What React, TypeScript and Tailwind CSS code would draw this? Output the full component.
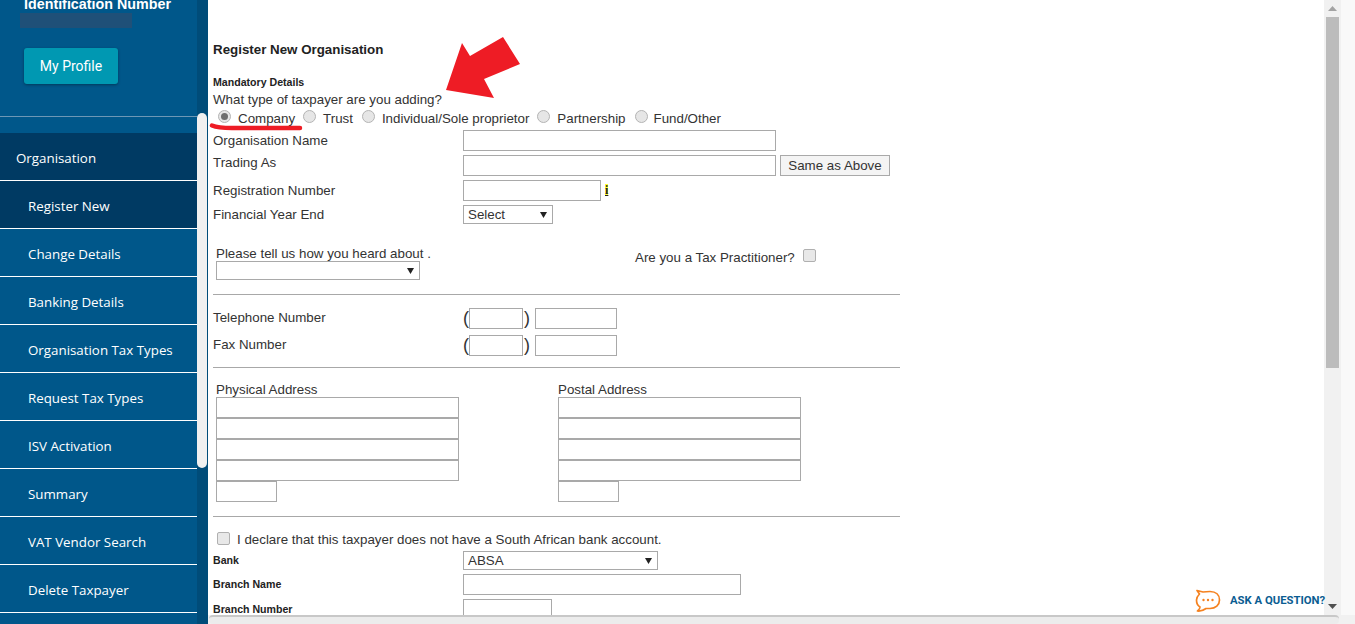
import type { ReactNode } from "react";

const NAV_ITEMS = [
  "Register New",
  "Change Details",
  "Banking Details",
  "Organisation Tax Types",
  "Request Tax Types",
  "ISV Activation",
  "Summary",
  "VAT Vendor Search",
  "Delete Taxpayer",
];

const TAXPAYER_TYPES = [
  { label: "Company", gap: "mr-[8px]", checked: true },
  { label: "Trust", gap: "mr-[9px]" },
  { label: "Individual/Sole proprietor", gap: "mr-[8px]" },
  { label: "Partnership", gap: "mr-[9px]" },
  { label: "Fund/Other", gap: "", tight: true },
];

function Radio({ checked }: { checked?: boolean }) {
  return (
    <span className="flex h-[13px] w-[13px] items-center justify-center rounded-full border border-[#b4b4b4] bg-[#e6e6e6]">
      {checked && <span className="h-[7px] w-[7px] rounded-full bg-[#6e6e6e]" />}
    </span>
  );
}

function Checkbox() {
  return <span className="block h-[13px] w-[13px] rounded-[2px] border border-[#b0b0b0] bg-[#e8e8e8]" />;
}

function TextBox({ className }: { className: string }) {
  return <input className={`block h-[21px] border border-[#a9a9a9] bg-white ${className}`} />;
}

function Dropdown({ value, className }: { value: string; className: string }) {
  return (
    <div className={`flex h-[19px] items-center justify-between border border-[#a9a9a9] bg-white pl-[4px] pr-[5px] ${className}`}>
      <span>{value}</span>
      <svg width="7" height="6" viewBox="0 0 7 6">
        <path d="M0 0h7L3.500 6z" fill="#222" />
      </svg>
    </div>
  );
}

function Label({ children, bold }: { children: ReactNode; bold?: boolean }) {
  return (
    <div className={`w-[250px] shrink-0 pb-[2px] ${bold ? "text-[10.6px] font-bold text-[#222]" : ""}`}>{children}</div>
  );
}

function Divider({ className }: { className: string }) {
  return <div className={`h-px w-[687px] bg-[#a8a8a8] ${className}`} />;
}

function AddressBlock({ title, className }: { title: string; className: string }) {
  return (
    <div className={`w-[243px] pt-[14px] ${className}`}>
      <div className="h-[15px] leading-[15px]">{title}</div>
      {[0, 1, 2, 3].map((i) => (
        <TextBox key={i} className="w-[243px]" />
      ))}
      <TextBox className="w-[61px]" />
    </div>
  );
}

function PhoneInputs() {
  return (
    <>
      <span className="-mt-[2px] w-[6px] text-[18px] font-light">(</span>
      <TextBox className="w-[54px]" />
      <span className="-mt-[2px] w-[12px] pl-[1px] text-[18px] font-light">)</span>
      <TextBox className="w-[82px]" />
    </>
  );
}

function Sidebar() {
  return (
    <aside className="relative h-full w-[208px] shrink-0 overflow-hidden bg-[#00578a] font-['Open_Sans',sans-serif] text-white">
      <div className="flow-root h-[133px] w-[197px]">
        <div className="-mt-[4px] pl-[24px] font-['Liberation_Sans',sans-serif] text-[14.3px] font-bold leading-[16px]">
          Identification Number
        </div>
        <div className="ml-[20px] mt-[1px] h-[15px] w-[112px] bg-[#1f5078]" />
        <div className="ml-[24px] mt-[20px] flex h-[36px] w-[94px] items-center justify-center rounded-[3px] bg-[#0098b2] font-['Roboto',sans-serif] text-[14px] shadow-[0_1px_3px_rgba(0,0,0,0.35)]">
          My Profile
        </div>
        <div className="mt-[32px] h-px bg-[#6d97b5]" />
      </div>
      <nav className="w-[197px] text-[13.33px]">
        <div className="flex h-[48px] items-center border-b border-white bg-[#003a63] pl-[16px] pt-[2px]">Organisation</div>
        {NAV_ITEMS.map((item, i) => (
          <div
            key={item}
            className={`flex h-[48px] items-center border-b border-white pl-[28px] pt-[2px] ${i === 0 ? "bg-[#003a63]" : ""}`}
          >
            {item}
          </div>
        ))}
      </nav>
      <div className="absolute bottom-0 right-0 top-0 w-[11px] bg-[#004c79]">
        <div className="absolute left-0 top-[113px] h-[355px] w-[10px] rounded-full bg-[#f0f0f0]" />
      </div>
    </aside>
  );
}

function Overlays() {
  return (
    <>
      {/* hand drawn annotations on the screenshot */}
      <svg className="absolute left-[440px] top-[32px]" width="90" height="72" viewBox="0 0 90 72">
        <path d="M6 58 L22 11 L30 24 L63 5 L80 32 L44 47 L54 66 Z" fill="#ee1c25" />
      </svg>
      <svg className="absolute left-[208px] top-[122px]" width="100" height="12" viewBox="0 0 100 12">
        <path d="M4 3.500 Q10 6 24 6 L92 6" fill="none" stroke="#ee1c25" strokeWidth="4.500" strokeLinecap="round" />
      </svg>
      {/* page scrollbars */}
      <div className="absolute right-[14px] top-0 h-[615px] w-[17px] bg-[#f1f1f1]">
        <svg className="absolute left-[4px] top-[6px]" width="9" height="5" viewBox="0 0 9 5">
          <path d="M4.500 0L9 5H0z" fill="#a3a3a3" />
        </svg>
        <div className="absolute left-[2px] top-[17px] h-[351px] w-[13px] bg-[#bcbcbc]" />
        <svg className="absolute bottom-[6px] left-[4px]" width="9" height="5" viewBox="0 0 9 5">
          <path d="M0 0h9L4.500 5z" fill="#505050" />
        </svg>
      </div>
      <div className="absolute right-0 top-0 h-full w-[14px] bg-[#f9f9f9]" />
      <div className="absolute bottom-0 left-[208px] right-0 h-[9px] bg-[#f1f1f1]">
        <div className="ml-[1px] h-[9px] w-[1130px] rounded-[4px] border-t-2 border-[#c8c8c8] bg-[#ececec]" />
      </div>
      {/* chat widget */}
      <div className="absolute left-[1195px] top-[589px] flex items-center">
        <svg width="26" height="24" viewBox="0 0 26 24" fill="none">
          <path
            d="M2 1.500 L8 3 Q11 2.500 15 2.500 C21 2.500 24.500 6 24.500 11 C24.500 16 20.500 19.500 15 19.500 L11 19.500 Q7 22.500 2.500 22 Q5 20 5 18 C2.500 16.500 1.500 14 1.500 11 C1.500 8.500 3 6.500 4.500 5 Z"
            stroke="#f58220"
            strokeWidth="1.700"
            strokeLinejoin="round"
          />
          <circle cx="8.500" cy="11" r="1.200" fill="#f58220" />
          <circle cx="13" cy="11" r="1.200" fill="#f58220" />
          <circle cx="17.500" cy="11" r="1.200" fill="#f58220" />
        </svg>
        <span className="ml-[9px] font-['Roboto',sans-serif] text-[11.3px] font-bold leading-[16px] text-[#0b5d92]">
          ASK A QUESTION?
        </span>
      </div>
    </>
  );
}

export default function App() {
  return (
    <div className="relative flex h-[624px] w-[1355px] overflow-hidden bg-white font-['Liberation_Sans',sans-serif] text-[13.33px] leading-[16px] text-[#333]">
      <Sidebar />
      <main className="flow-root h-full w-[700px] shrink-0 overflow-hidden pl-[5px]">
        <h1 className="mt-[42px] text-[13.33px] font-bold leading-[16px] text-[#222]">Register New Organisation</h1>
        <div className="mt-[18px] text-[10.6px] font-bold leading-[13px] text-[#222]">Mandatory Details</div>
        <div className="mt-[3px] h-[16px]">What type of taxpayer are you adding?</div>
        <div className="mt-[2px] flex h-[16px] items-center pl-[5px]">
          {TAXPAYER_TYPES.map((t) => (
            <div key={t.label} className={`flex items-center ${t.gap}`}>
              <span className={`-mt-[4px] ${t.tight ? "mr-[6px]" : "mr-[7px]"}`}>
                <Radio checked={t.checked} />
              </span>
              <span className="mt-[1px]">{t.label}</span>
            </div>
          ))}
        </div>

        <div className="mt-[4px] flex h-[21px] items-center">
          <div className="w-[250px]">Organisation Name</div>
          <TextBox className="w-[313px]" />
        </div>
        <div className="mt-[4px] flex h-[21px] items-start">
          <div className="w-[250px]">Trading As</div>
          <TextBox className="w-[313px]" />
          <button className="ml-[4px] h-[21px] w-[110px] border border-[#a9a9a9] bg-[#f4f4f4] text-[#333]">
            Same as Above
          </button>
        </div>
        <div className="mt-[4px] flex h-[21px] items-center">
          <div className="w-[250px]">Registration Number</div>
          <TextBox className="w-[138px]" />
          <span className="ml-[4px] -mt-[2px] bg-[#ffff33] font-['Liberation_Serif',serif] text-[12px] font-bold leading-[12px] text-[#222] underline">
            i
          </span>
        </div>
        <div className="mt-[4px] flex h-[19px] items-center">
          <div className="w-[250px]">Financial Year End</div>
          <Dropdown value="Select" className="w-[90px]" />
        </div>

        <div className="mt-[22px] flex h-[35px] pl-[3px]">
          <div className="w-[419px]">
            <div className="h-[15px]">Please tell us how you heard about .</div>
            <Dropdown value="" className="w-[204px]" />
          </div>
          <div className="flex h-[16px] items-start pt-[4px]">
            <span>Are you a Tax Practitioner?</span>
            <span className="-mt-[1px] ml-[8px]">
              <Checkbox />
            </span>
          </div>
        </div>

        <Divider className="mt-[13px]" />

        <div className="mt-[13px] flex h-[21px] items-center">
          <Label>Telephone Number</Label>
          <PhoneInputs />
        </div>
        <div className="mt-[6px] flex h-[21px] items-center">
          <Label>Fax Number</Label>
          <PhoneInputs />
        </div>

        <Divider className="mt-[11px]" />

        <div className="flex">
          <AddressBlock title="Physical Address" className="ml-[3px]" />
          <AddressBlock title="Postal Address" className="ml-[99px]" />
        </div>

        <Divider className="mt-[14px]" />

        <div className="mt-[15px] flex h-[16px] items-center pl-[4px]">
          <span className="-mt-[3px]">
            <Checkbox />
          </span>
          <span className="ml-[7px]">I declare that this taxpayer does not have a South African bank account.</span>
        </div>
        <div className="mt-[3px] flex h-[19px] items-center">
          <Label bold>Bank</Label>
          <Dropdown value="ABSA" className="w-[195px]" />
        </div>
        <div className="mt-[4px] flex h-[21px] items-center">
          <Label bold>Branch Name</Label>
          <TextBox className="w-[278px]" />
        </div>
        <div className="mt-[4px] flex h-[21px] items-center">
          <Label bold>Branch Number</Label>
          <TextBox className="w-[89px]" />
        </div>
      </main>
      <Overlays />
    </div>
  );
}
